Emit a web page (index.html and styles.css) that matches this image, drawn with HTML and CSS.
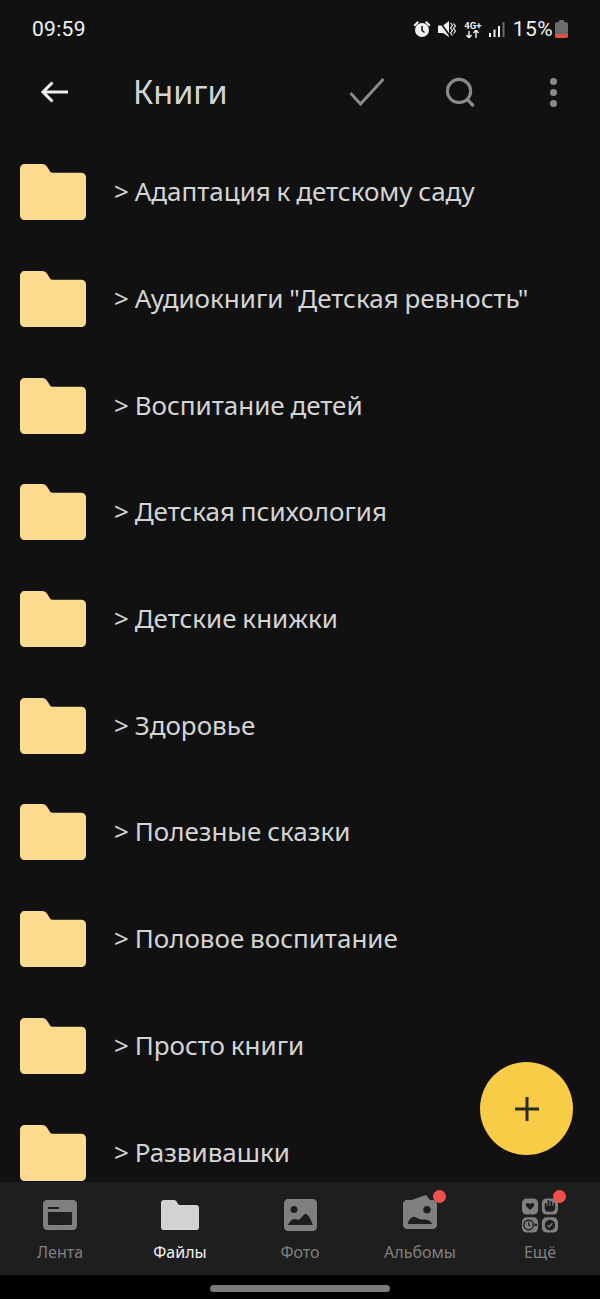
FILE: index.html
```html
<!DOCTYPE html>
<html lang="en">
<head>
    <meta charset="UTF-8">
    <meta name="viewport" content="width=device-width, initial-scale=1.0">
    <title>Книги</title>
    <link rel="stylesheet" href="styles.css">
</head>
<body>

<svg class="defs" width="0" height="0">
    <symbol id="folder" viewBox="0 0 67 56" preserveAspectRatio="none">
        <path d="M5 0H22C25 0 26.500 1 28 3.500L30.500 7.500C31 8.300 31.800 8.700 33 8.700H62C65 8.700 67 10.700 67 13.500V51C67 54 65 56 62 56H5C2 56 0 54 0 51V5C0 2 2 0 5 0Z"/>
    </symbol>
</svg>

<div class="phone">
    <div class="status-bar">
        <span class="clock">09:59</span>
        <div class="status-icons">
            <svg class="st-alarm" width="18" height="18" viewBox="0 0 18 18">
                <circle cx="9" cy="10" r="7" fill="#f2f2f2"/>
                <path d="M9 6V10.500L11.500 12.500" stroke="#111" stroke-width="1.500" fill="none"/>
                <path d="M0.500 5L4.500 1L6 2.500L2 6.500ZM17.500 5L13.500 1L12 2.500L16 6.500Z" fill="#f2f2f2"/>
            </svg>
            <svg class="st-mute" width="18" height="18" viewBox="0 0 18 18">
                <path d="M0 5.500H5L11 1V17L5 13H0Z" fill="#f2f2f2"/>
                <path d="M1 0.500L13 17.500" stroke="#111" stroke-width="1.600"/>
                <path d="M12.500 3L14.500 5.500L12.500 8L14.500 10.500L12.500 13L14.500 15.500M15.500 3.500L17.500 6L15.500 8.500L17.500 11L15.500 13.500" stroke="#f2f2f2" stroke-width="1.200" fill="none"/>
            </svg>
            <div class="st-net">
                <span class="st-net-label">4G+</span>
                <svg width="16" height="8" viewBox="0 0 16 8">
                    <path d="M4 8V1M1.500 5L4 8L6.500 5M11 0V8M8.500 3L11 0L13.500 3" stroke="#f2f2f2" stroke-width="1.400" fill="none"/>
                </svg>
            </div>
            <svg class="st-signal" width="16" height="17" viewBox="0 0 16 17">
                <rect x="0" y="12" width="2" height="4" fill="#f2f2f2"/>
                <rect x="4.500" y="8.500" width="2" height="7.500" fill="#f2f2f2"/>
                <rect x="9" y="5" width="2" height="11" fill="#f2f2f2"/>
                <rect x="13.500" y="1" width="2" height="15" fill="#6a6a6a"/>
            </svg>
            <span class="st-pct">15%</span>
            <svg class="st-batt" width="13" height="18" viewBox="0 0 13 18">
                <path d="M4 0H9V2H11C12 2 13 3 13 4V16C13 17 12 18 11 18H2C1 18 0 17 0 16V4C0 3 1 2 2 2H4Z" fill="#6c6c6c"/>
                <path d="M0 14H13V16C13 17 12 18 11 18H2C1 18 0 17 0 16Z" fill="#e0513f"/>
            </svg>
        </div>
    </div>

    <div class="app-bar">
        <svg class="icon-back" width="30" height="24" viewBox="0 0 30 24">
            <path d="M28 12H3M12.500 2.500L3 12L12.500 21.500" stroke="#f0f0f0" stroke-width="3" fill="none"/>
        </svg>
        <h1 class="title">Книги</h1>
        <svg class="icon-check" width="36" height="28" viewBox="0 0 36 28">
            <path d="M1.500 15L11.500 26L34.500 1" stroke="#8a8a8a" stroke-width="3" fill="none"/>
        </svg>
        <svg class="icon-search" width="31" height="31" viewBox="0 0 32 32">
            <circle cx="14.500" cy="14.500" r="12" stroke="#8a8a8a" stroke-width="3.200" fill="none"/>
            <path d="M23 23L29.500 30" stroke="#8a8a8a" stroke-width="3.400"/>
        </svg>
        <div class="icon-more"><i></i><i></i><i></i></div>
    </div>

    <ul class="file-list">
        <li class="file-row"><svg class="folder" width="66" height="56"><use href="#folder"/></svg><span>&gt; Адаптация к детскому саду</span></li>
        <li class="file-row"><svg class="folder" width="66" height="56"><use href="#folder"/></svg><span>&gt; Аудиокниги "Детская ревность"</span></li>
        <li class="file-row"><svg class="folder" width="66" height="56"><use href="#folder"/></svg><span>&gt; Воспитание детей</span></li>
        <li class="file-row"><svg class="folder" width="66" height="56"><use href="#folder"/></svg><span>&gt; Детская психология</span></li>
        <li class="file-row"><svg class="folder" width="66" height="56"><use href="#folder"/></svg><span>&gt; Детские книжки</span></li>
        <li class="file-row"><svg class="folder" width="66" height="56"><use href="#folder"/></svg><span>&gt; Здоровье</span></li>
        <li class="file-row"><svg class="folder" width="66" height="56"><use href="#folder"/></svg><span>&gt; Полезные сказки</span></li>
        <li class="file-row"><svg class="folder" width="66" height="56"><use href="#folder"/></svg><span>&gt; Половое воспитание</span></li>
        <li class="file-row"><svg class="folder" width="66" height="56"><use href="#folder"/></svg><span>&gt; Просто книги</span></li>
        <li class="file-row"><svg class="folder" width="66" height="56"><use href="#folder"/></svg><span>&gt; Развивашки</span></li>
    </ul>

    <div class="fab">
        <svg width="24" height="24" viewBox="0 0 24 24">
            <path d="M12 0V24M0 12H24" stroke="#2b2a22" stroke-width="3"/>
        </svg>
    </div>

    <nav class="tab-bar">
        <div class="tab">
            <svg width="34" height="30" viewBox="0 0 34 30">
                <path fill-rule="evenodd" d="M4 0H30C32 0 34 2 34 4V26C34 28 32 30 30 30H4C2 30 0 28 0 26V4C0 2 2 0 4 0ZM5 7V9H16V7ZM5 12V24C5 25 6 25 6 25H28C29 25 29 24 29 24V13C29 12 28 12 28 12Z" fill="#808080"/>
            </svg>
            <span>Лента</span>
        </div>
        <div class="tab tab-active">
            <svg width="38" height="30" viewBox="0 0 67 53">
                <path d="M5 0H22C25 0 26.500 1 28 3.500L30.500 7.500C31 8.300 31.800 8.700 33 8.700H62C65 8.700 67 10.700 67 13.500V48C67 51 65 53 62 53H5C2 53 0 51 0 48V5C0 2 2 0 5 0Z" fill="#d2d2d2"/>
            </svg>
            <span>Файлы</span>
        </div>
        <div class="tab">
            <svg width="33" height="32" viewBox="0 0 33 32">
                <path fill-rule="evenodd" d="M4 0H29C31 0 33 2 33 4V28C33 30 31 32 29 32H4C2 32 0 30 0 28V4C0 2 2 0 4 0ZM10 7A3.500 3.500 0 1 0 10 14A3.500 3.500 0 1 0 10 7ZM4 26H29C27 21 25 16 21.500 14.500C19 16 17 20 14 21C10 19 7 20 4 26Z" fill="#808080"/>
            </svg>
            <span>Фото</span>
        </div>
        <div class="tab">
            <div class="tab-icon">
                <svg class="icon-albums" width="36" height="35" viewBox="0 0 36 35">
                    <path d="M1 8L24 0L28 5H4L2 12Z" fill="#808080"/>
                    <path fill-rule="evenodd" d="M5 5H31C33 5 35 7 35 9V30C35 32 33 34 31 34H5C3 34 1 32 1 30V9C1 7 3 5 5 5ZM25 11A3.700 3.700 0 1 0 25 18.400A3.700 3.700 0 1 0 25 11ZM6 29H30C29 25 24 24 20 24.500C16 25 14 21 11 22C8 23 6 26 6 29Z" fill="#808080"/>
                </svg>
                <i class="dot"></i>
            </div>
            <span>Альбомы</span>
        </div>
        <div class="tab">
            <div class="tab-icon">
                <svg width="36" height="36" viewBox="0 0 38 37">
                    <rect x="0" y="1" width="17" height="17" rx="5" fill="#808080"/>
                    <path d="M4 7C6 5 7 6 8.500 7C10 6 11 5 13 7C13 10 10 12 8.500 13C7 12 4 10 4 7Z" fill="#1e1e1e"/>
                    <rect x="21" y="1" width="17" height="17" rx="5" fill="#808080"/>
                    <path d="M24 6V12C24 14 26 15 28 15H31C33 15 35 13 35 11V6H33V9H32V4H30V9H29V3H27V9H26V6Z" fill="#1e1e1e"/>
                    <rect x="0" y="21" width="17" height="16" rx="5" fill="#808080"/>
                    <circle cx="7" cy="29" r="5" fill="none" stroke="#1e1e1e" stroke-width="1.500"/>
                    <path d="M7 26V29L9 30" stroke="#1e1e1e" stroke-width="1.200" fill="none"/>
                    <circle cx="14.500" cy="29" r="1.500" fill="#1e1e1e"/>
                    <rect x="21" y="21" width="17" height="16" rx="5" fill="#808080"/>
                    <circle cx="29.500" cy="29" r="5.500" fill="#1e1e1e"/>
                    <path d="M27 29.500L29 31L32 27" stroke="#808080" stroke-width="1.500" fill="none"/>
                </svg>
                <i class="dot"></i>
            </div>
            <span>Ещё</span>
        </div>
    </nav>

    <div class="gesture-bar"><div class="gesture-pill"></div></div>
</div>

</body>
</html>
```

FILE: styles.css
```css
body {
    margin: 0;
    background-color: #111112;
    font-family: "Noto Sans", "Open Sans", sans-serif;
}
.defs {
    position: absolute;
}
.phone {
    position: relative;
    width: 600px;
    height: 1299px;
    display: flex;
    flex-direction: column;
    overflow: hidden;
    background-color: #111112;
}

/* status bar */
.status-bar {
    height: 58px;
    flex: none;
    display: flex;
    align-items: center;
    justify-content: space-between;
    padding: 0 32px 0 32px;
    color: #f2f2f2;
}
.clock {
    font-family: "Roboto", sans-serif;
    font-size: 21px;
    letter-spacing: 0.300px;
}
.status-icons {
    display: flex;
    align-items: center;
}
.st-alarm {
    margin-right: 7px;
}
.st-mute {
    margin-right: 8px;
}
.st-net {
    width: 18px;
    display: flex;
    flex-direction: column;
    align-items: center;
    margin-right: 7px;
}
.st-net-label {
    font-family: "Roboto", sans-serif;
    font-size: 9.500px;
    font-weight: 700;
    line-height: 9px;
}
.st-signal {
    margin-right: 8px;
}
.st-pct {
    font-family: "Roboto", sans-serif;
    font-size: 21px;
    letter-spacing: 0.400px;
    margin-right: 2px;
}

/* app bar */
.app-bar {
    height: 68px;
    flex: none;
    display: flex;
    align-items: center;
}
.icon-back {
    margin-left: 40px;
    flex: none;
}
.title {
    margin: 0 0 0 63px;
    padding-bottom: 3px;
    font-size: 32.400px;
    font-weight: 400;
    color: #d4d4d4;
    flex: 1;
}
.icon-check {
    margin-right: 60px;
    flex: none;
}
.icon-search {
    margin-right: 73px;
    flex: none;
}
.icon-more {
    width: 9px;
    margin-right: 42px;
    display: flex;
    flex-direction: column;
    gap: 4px;
    flex: none;
}
.icon-more i {
    width: 7px;
    height: 7px;
    margin-left: 1px;
    border-radius: 50%;
    background-color: #8a8a8a;
}

/* file list */
.file-list {
    list-style: none;
    margin: 0;
    padding: 13px 0 0;
    flex: 1;
    min-height: 0;
    overflow: hidden;
}
.file-row {
    height: 106.700px;
    display: flex;
    align-items: center;
    padding-left: 20px;
    font-size: 26px;
    word-spacing: -1px;
    color: #d4d4d4;
    white-space: nowrap;
}
.file-row span {
    padding-bottom: 2px;
}
.folder {
    fill: #fbdc8f;
    flex: none;
    margin-right: 28px;
}

.fab {
    position: absolute;
    left: 480px;
    top: 1062px;
    width: 93px;
    height: 93px;
    border-radius: 50%;
    background-color: #f8cc46;
    display: flex;
    align-items: center;
    justify-content: center;
}

/* bottom tabs */
.tab-bar {
    height: 93px;
    flex: none;
    display: flex;
    background-color: #1e1e1e;
}
.tab {
    width: 120px;
    display: flex;
    flex-direction: column;
    align-items: center;
    font-size: 16px;
    color: #808080;
}
.tab > svg,
.tab-icon {
    height: 36px;
    margin-top: 15px;
    margin-bottom: 8px;
    display: flex;
    align-items: center;
    position: relative;
}
.tab-active {
    color: #f0f0f0;
}
.icon-albums {
    margin-bottom: 5px;
}
.dot {
    position: absolute;
    right: -7.500px;
    top: -7px;
    width: 13px;
    height: 13px;
    border-radius: 50%;
    background-color: #f0504c;
}

.gesture-bar {
    height: 24px;
    flex: none;
    background-color: #000;
    display: flex;
    justify-content: center;
    padding-top: 10px;
    box-sizing: border-box;
}
.gesture-pill {
    width: 180px;
    height: 7px;
    border-radius: 4px;
    background-color: #7a7a7a;
}
```
